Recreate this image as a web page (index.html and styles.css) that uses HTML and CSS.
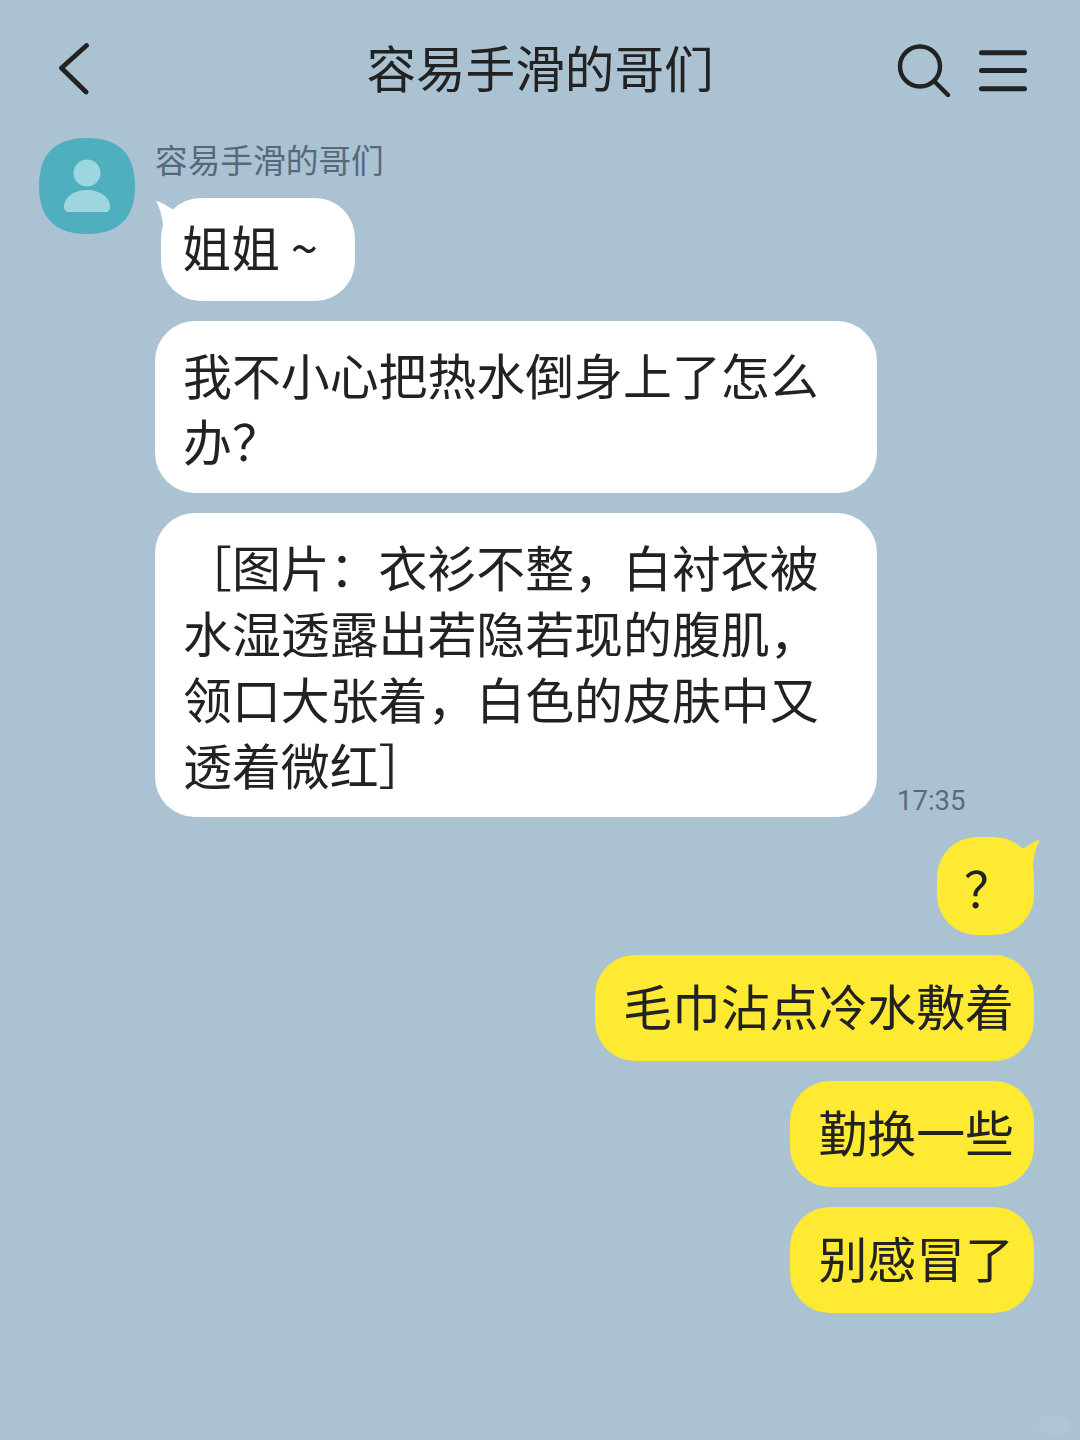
FILE: index.html
```html
<!DOCTYPE html>
<html lang="zh-CN">
<head>
<meta charset="utf-8">
<title>容易手滑的哥们</title>
<link rel="stylesheet" href="styles.css">
</head>
<body>
<div class="page">
  <header class="header">
    <div class="header-left">
      <svg class="icon-back" width="30" height="52" viewBox="0 0 30 52"><path d="M27.500 2.500 L2.500 25 L27 49" fill="none" stroke="#222" stroke-width="4.800" stroke-linecap="round" stroke-linejoin="round"/></svg>
    </div>
    <h1 class="title">容易手滑的哥们</h1>
    <div class="header-right">
      <svg width="56" height="56" viewBox="0 0 56 56"><circle cx="23" cy="25.500" r="20" fill="none" stroke="#222" stroke-width="4.400"/><path d="M37 40 L51 54" fill="none" stroke="#222" stroke-width="4.400" stroke-linecap="round"/></svg>
      <svg width="48" height="46" viewBox="0 0 48 46"><path d="M2.500 6.700 H45.500 M2.500 24.500 H45.500 M2.500 42.700 H45.500" fill="none" stroke="#222" stroke-width="5" stroke-linecap="round"/></svg>
    </div>
  </header>
  <main class="chat">
    <section class="incoming">
      <svg class="avatar" width="96" height="96" viewBox="0 0 96 96">
        <path d="M48 0 C80 0 96 16 96 48 C96 80 80 96 48 96 C16 96 0 80 0 48 C0 16 16 0 48 0 Z" fill="#50afbe"/>
        <circle cx="48" cy="35" r="13.500" fill="#9dd6de"/>
        <path d="M25 69 C25 60 34 52 48 52 C62 52 71 60 71 69 C71 72 69 74 66 74 H30 C27 74 25 72 25 69 Z" fill="#9dd6de"/>
      </svg>
      <div class="incoming-body">
        <div class="name">容易手滑的哥们</div>
        <div class="bubble white first">
          <svg class="tail tail-left" width="20" height="34" viewBox="0 0 20 34"><path d="M0 0 C6 1 11 5 16 8 L20 8 L20 34 L7 34 C8 22 5 9 0 0 Z" fill="#fff"/></svg>
          姐姐 ~
        </div>
        <div class="bubble white wide">我不小心把热水倒身上了怎么办？</div>
        <div class="time-row">
          <div class="bubble white wide">［图片：衣衫不整，白衬衣被水湿透露出若隐若现的腹肌，领口大张着，白色的皮肤中又透着微红］</div>
          <time class="time">17:35</time>
        </div>
      </div>
    </section>
    <section class="outgoing">
      <div class="bubble yellow short">
        <svg class="tail tail-right" width="20" height="34" viewBox="0 0 20 34"><path d="M20 0 C14 1 9 5 4 8 L0 8 L0 34 L13 34 C12 22 15 9 20 0 Z" fill="#ffea33"/></svg>
        ？
      </div>
      <div class="bubble yellow">毛巾沾点冷水敷着</div>
      <div class="bubble yellow">勤换一些</div>
      <div class="bubble yellow">别感冒了</div>
    </section>
  </main>
  <div class="watermark"></div>
</div>
</body>
</html>
```
FILE: styles.css
```css
* { box-sizing: border-box; }
html, body { margin: 0; padding: 0; }
body {
  background: #abc2d3;
  color: #222;
  font-family: "Noto Sans CJK SC", "Noto Sans", sans-serif;
}
.page {
  position: relative;
  width: 1080px;
  height: 1440px;
  overflow: hidden;
}
.header {
  height: 138px;
  display: grid;
  grid-template-columns: 1fr auto 1fr;
  align-items: center;
}
.header-left {
  padding-left: 59px;
  display: flex;
}
.icon-back { display: block; }
.header-right {
  display: flex;
  justify-content: flex-end;
  align-items: center;
  gap: 26px;
  padding-right: 53px;
}
.title {
  margin: 0;
  padding-bottom: 6px;
  font-size: 49.600px;
  font-weight: 400;
  line-height: 66px;
}
.chat {
  padding: 0 46px 0 39px;
  display: flex;
  flex-direction: column;
  gap: 20px;
}
.incoming {
  display: flex;
  gap: 20px;
  align-items: flex-start;
}
.avatar { flex: none; display: block; }
.incoming-body {
  display: flex;
  flex-direction: column;
  align-items: flex-start;
  gap: 20px;
}
.name {
  font-size: 32.700px;
  line-height: 42px;
  color: #56697a;
  margin-bottom: -2px;
}
.bubble {
  position: relative;
  font-size: 48.900px;
  line-height: 66px;
  padding: 17px 20px 23px 28px;
  border-radius: 40px;
}
.white { background: #fff; }
.yellow { background: #ffea33; }
.wide {
  width: 722px;
  padding: 20px 19px 20px 28px;
}
.first {
  margin-left: 6px;
  width: 194px;
  padding: 15px 10px 22px 21px;
  white-space: nowrap;
}
.tail { position: absolute; display: block; }
.tail-left { left: -5px; top: 3px; }
.tail-right { right: -6px; top: 3px; }
.time-row {
  display: flex;
  align-items: flex-end;
  gap: 20px;
}
.time {
  font-family: Roboto, "Noto Sans", sans-serif;
  font-size: 27.500px;
  line-height: 32px;
  color: #5a6c7b;
}
.outgoing {
  display: flex;
  flex-direction: column;
  align-items: flex-end;
  gap: 20px;
}
.short {
  width: 97px;
  height: 98px;
  padding: 17px 0 0 6px;
  text-align: center;
}
.watermark {
  position: absolute;
  right: 8px;
  bottom: 6px;
  width: 34px;
  height: 18px;
  border-radius: 9px;
  background: rgba(255, 255, 255, 0.07);
}
```
